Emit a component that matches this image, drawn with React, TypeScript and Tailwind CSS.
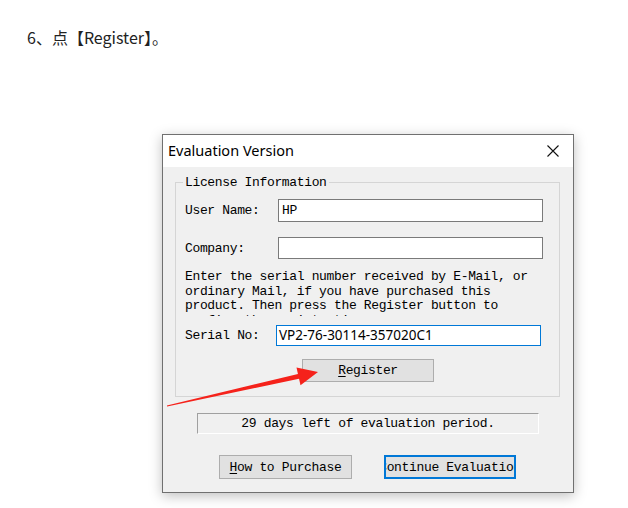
export default function App() {
  return (
    <div className="relative w-[628px] h-[508px] bg-white overflow-hidden">
      <div className="pt-[26px] pl-[27px] text-[16px] leading-[22px] text-[#222] font-['Noto_Sans_CJK_SC','Noto_Sans',sans-serif]">
        6、点【Register】。
      </div>

      <div className="ml-[162px] mt-[86px] w-[412px] h-[359px] border border-[#707070] bg-[#f0f0f0] shadow-[0_3px_12px_rgba(0,0,0,0.25)] flex flex-col">
        <div className="h-[32px] bg-white flex items-center justify-between pl-[5px] pr-[14px]">
          <span className="text-[14.5px] text-black font-['Noto_Sans',sans-serif]">Evaluation Version</span>
          <svg width="12" height="12" viewBox="0 0 12 12">
            <path d="M0.5 0.5 L11.5 11.5 M11.5 0.5 L0.5 11.5" stroke="#111" strokeWidth="1.1" fill="none" />
          </svg>
        </div>

        <div className="flex-1 flex flex-col font-['Liberation_Mono',monospace] text-[13px] tracking-[-0.35px] text-black">
          <div className="relative ml-[12px] mt-[15px] w-[385px] h-[215px] border border-[#d5d5d5] pl-[9px] flex flex-col">
            <span className="absolute left-[7px] top-[-8px] px-[2px] bg-[#f0f0f0] leading-[15px]">License Information</span>

            <div className="mt-[16px] flex items-center h-[23px]">
              <span className="w-[93px] leading-[15px]">User Name:</span>
              <div className="w-[265px] h-[23px] border border-[#7a7a7a] bg-white flex items-center pl-[3px] leading-[15px]">HP</div>
            </div>

            <div className="mt-[15px] flex items-center h-[22px]">
              <span className="w-[93px] leading-[15px]">Company:</span>
              <div className="w-[265px] h-[22px] border border-[#7a7a7a] bg-white" />
            </div>

            <div className="mt-[11px] h-[46px] overflow-hidden leading-[14.5px] whitespace-nowrap">
              <div>Enter the serial number received by E-Mail, or</div>
              <div>ordinary Mail, if you have purchased this</div>
              <div>product. Then press the Register button to</div>
              <div>confirm the registration.</div>
            </div>

            <div className="mt-[9px] flex items-center h-[21px]">
              <span className="w-[91px] leading-[15px]">Serial No:</span>
              <div className="w-[265px] h-[21px] border border-[#0078d7] bg-white flex items-center pl-[2px] text-[13.5px] tracking-normal font-['Noto_Sans',sans-serif] leading-[15px]">
                VP2-76-30114-357020C1
              </div>
            </div>

            <div className="mt-[13px] ml-[117px] w-[132px] h-[23px] border border-[#adadad] bg-[#e1e1e1] flex items-center justify-center leading-[15px]">
              <span><span className="underline underline-offset-2">R</span>egister</span>
            </div>
          </div>

          <div className="ml-[34px] mt-[16px] w-[342px] h-[21px] border-t border-l border-t-[#a0a0a0] border-l-[#a0a0a0] border-b border-r border-b-white border-r-white flex items-center justify-center leading-[15px]">
            29 days left of evaluation period.
          </div>

          <div className="mt-[21px] ml-[56px] flex gap-[32px]">
            <div className="w-[133px] h-[24px] border border-[#adadad] bg-[#e1e1e1] flex items-center justify-center leading-[15px]">
              <span><span className="underline underline-offset-2">H</span>ow to Purchase</span>
            </div>
            <div className="w-[132px] h-[24px] border-2 border-[#0078d7] bg-[#e1e1e1] flex items-center justify-center overflow-hidden leading-[15px] whitespace-nowrap">
              <span>Continue Evaluation</span>
            </div>
          </div>
        </div>
      </div>

      <svg className="absolute inset-0 pointer-events-none" width="628" height="508" viewBox="0 0 628 508">
        <polygon
          points="166.9,405.5 297.95,373.97 296.5,367.6 318,372 300.5,385.2 299.05,378.8 167.1,406.5"
          fill="#f5221b"
        />
      </svg>
    </div>
  );
}
